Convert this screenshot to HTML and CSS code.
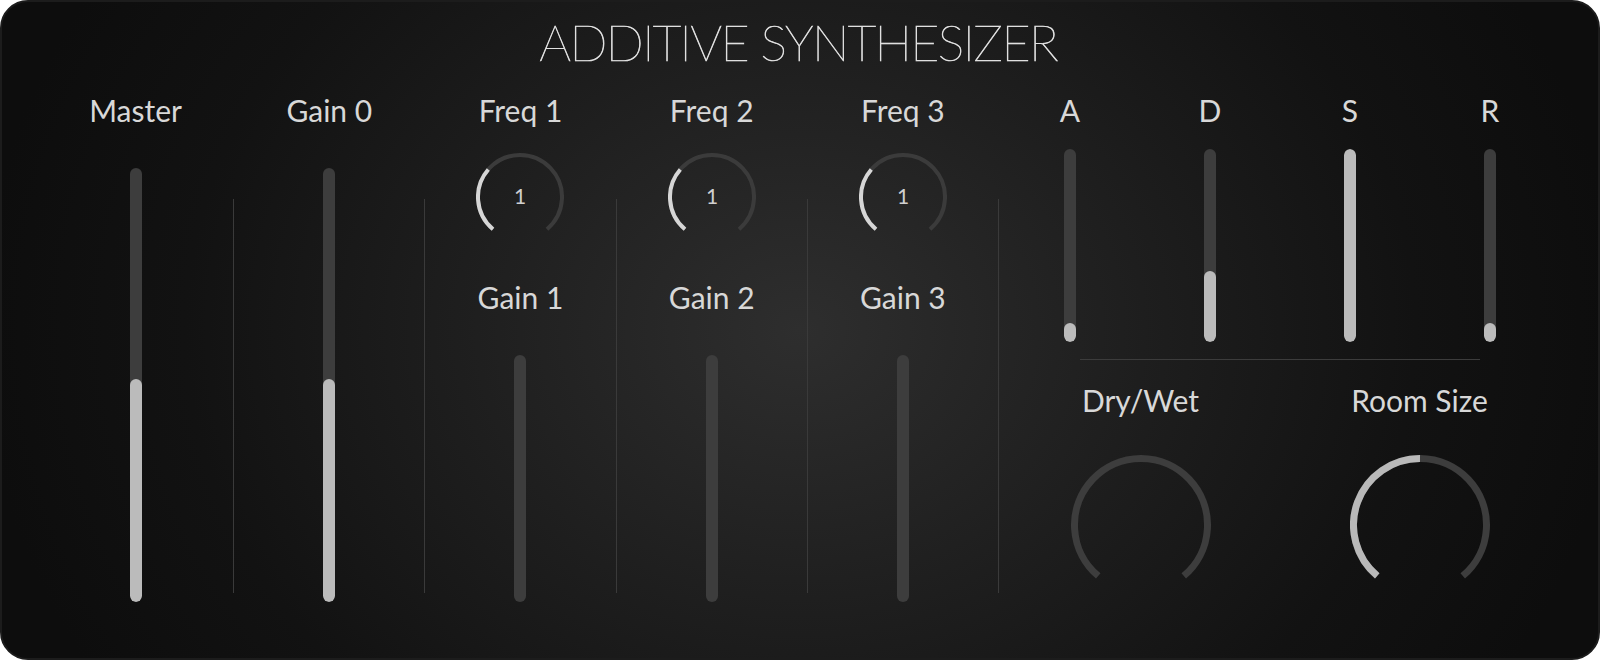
FILE: index.html
```html
<!DOCTYPE html>
<html>
<head>
<meta charset="utf-8">
<title>Additive Synthesizer</title>
<link rel="stylesheet" href="styles.css">
</head>
<body>
<div class="panel">
  <h1 class="title">ADDITIVE SYNTHESIZER</h1>
  <div class="main">
    <div class="col">
      <div class="label">Master</div>
      <div class="track tall"><div class="fill" style="height:51.5%"></div></div>
    </div>
    <div class="sep"></div>
    <div class="col">
      <div class="label">Gain 0</div>
      <div class="track tall"><div class="fill" style="height:51.5%"></div></div>
    </div>
    <div class="sep"></div>
    <div class="col">
      <div class="label">Freq 1</div>
      <svg class="knob-sm" width="88" height="88" viewBox="0 0 88 88">
        <path class="k-track" d="M 17.0 76.17 A 42 42 0 1 1 71.0 76.17"/>
        <path class="k-fill-sm" d="M 17.0 76.17 A 42 42 0 0 1 12.30 16.44"/>
        <text class="k-val" x="44" y="42">1</text>
      </svg>
      <div class="label label-gain">Gain 1</div>
      <div class="track short"></div>
    </div>
    <div class="sep"></div>
    <div class="col">
      <div class="label">Freq 2</div>
      <svg class="knob-sm" width="88" height="88" viewBox="0 0 88 88">
        <path class="k-track" d="M 17.0 76.17 A 42 42 0 1 1 71.0 76.17"/>
        <path class="k-fill-sm" d="M 17.0 76.17 A 42 42 0 0 1 12.30 16.44"/>
        <text class="k-val" x="44" y="42">1</text>
      </svg>
      <div class="label label-gain">Gain 2</div>
      <div class="track short"></div>
    </div>
    <div class="sep"></div>
    <div class="col">
      <div class="label">Freq 3</div>
      <svg class="knob-sm" width="88" height="88" viewBox="0 0 88 88">
        <path class="k-track" d="M 17.0 76.17 A 42 42 0 1 1 71.0 76.17"/>
        <path class="k-fill-sm" d="M 17.0 76.17 A 42 42 0 0 1 12.30 16.44"/>
        <text class="k-val" x="44" y="42">1</text>
      </svg>
      <div class="label label-gain">Gain 3</div>
      <div class="track short"></div>
    </div>
    <div class="sep"></div>
    <div class="right">
      <div class="adsr">
        <div class="env-col">
          <div class="label">A</div>
          <div class="track env"><div class="fill" style="height:10%"></div></div>
        </div>
        <div class="env-col">
          <div class="label">D</div>
          <div class="track env"><div class="fill" style="height:37%"></div></div>
        </div>
        <div class="env-col">
          <div class="label">S</div>
          <div class="track env"><div class="fill" style="height:100%"></div></div>
        </div>
        <div class="env-col">
          <div class="label">R</div>
          <div class="track env"><div class="fill" style="height:10%"></div></div>
        </div>
      </div>
      <div class="hr"></div>
      <div class="reverb">
        <div class="rev-col">
          <div class="label">Dry/Wet</div>
          <svg class="knob-lg" width="140" height="140" viewBox="0 0 140 140">
            <path class="k-track-lg" d="M 27.25 120.94 A 66.5 66.5 0 1 1 112.75 120.94"/>
          </svg>
        </div>
        <div class="rev-col">
          <div class="label">Room Size</div>
          <svg class="knob-lg" width="140" height="140" viewBox="0 0 140 140">
            <path class="k-track-lg" d="M 27.25 120.94 A 66.5 66.5 0 1 1 112.75 120.94"/>
            <path class="k-fill-lg" d="M 27.25 120.94 A 66.5 66.5 0 0 1 70 3.5"/>
          </svg>
        </div>
      </div>
    </div>
  </div>
</div>
</body>
</html>
```
FILE: styles.css
```css
html, body {
  margin: 0;
  padding: 0;
  background: #ffffff;
}

.panel {
  box-sizing: border-box;
  width: 1600px;
  height: 660px;
  border: 2px solid #1c1c1c;
  border-radius: 28px;
  padding: 15px 40px 0 36px;
  background: radial-gradient(ellipse 820px 680px at 50% 50%, #2e2e2e 0%, #1e1e1e 42%, #121212 75%, #0d0d0d 100%);
  font-family: "Lato", "Liberation Sans", sans-serif;
  color: #d8d8d8;
  overflow: hidden;
}

.title {
  margin: 0 0 29px 0;
  text-align: center;
  font-family: "Lato", "Liberation Sans", sans-serif;
  font-weight: 100;
  font-size: 50px;
  line-height: 50px;
  color: #e0e0e0;
  letter-spacing: -1.6px;
  -webkit-text-stroke: 0.7px #e0e0e0;
}

.main {
  display: flex;
  align-items: flex-start;
}

.col {
  width: 191px;
  display: flex;
  flex-direction: column;
  align-items: center;
}

.col:first-child {
  width: 196px;
}

.sep {
  width: 1px;
  height: 394px;
  margin-top: 103px;
  background: #3a3a3a;
}

.label {
  font-size: 30px;
  line-height: 28px;
  height: 28px;
  white-space: nowrap;
  color: #d8d8d8;
}

.track {
  position: relative;
  width: 12px;
  border-radius: 6px;
  background: #3d3d3d;
  display: flex;
  flex-direction: column;
  justify-content: flex-end;
  overflow: hidden;
}

.fill {
  width: 12px;
  border-radius: 6px;
  background: #bbbbbb;
}

.tall {
  height: 434px;
  margin-top: 44px;
}

.knob-sm {
  display: block;
  margin-top: 29px;
}

.k-track {
  fill: none;
  stroke: #3b3b3b;
  stroke-width: 4;
}

.k-fill-sm {
  fill: none;
  stroke: #d6d6d6;
  stroke-width: 4;
}

.k-val {
  fill: #d0d0d0;
  font-family: "Lato", "Liberation Sans", sans-serif;
  font-size: 21px;
  text-anchor: middle;
  dominant-baseline: central;
}

.label-gain {
  margin-top: 42px;
}

.short {
  height: 247px;
  margin-top: 44px;
}

.right {
  width: 559px;
  display: flex;
  flex-direction: column;
}

.adsr {
  display: grid;
  grid-template-columns: repeat(4, 140px);
  margin-left: 1px;
}

.env-col {
  display: flex;
  flex-direction: column;
  align-items: center;
}

.env {
  height: 193px;
  margin-top: 25px;
}

.hr {
  width: 400px;
  height: 1px;
  margin: 17px 0 0 81px;
  background: #3c3c3c;
}

.reverb {
  display: grid;
  grid-template-columns: 279px 279px;
  margin-top: 26px;
  margin-left: 2px;
}

.rev-col {
  display: flex;
  flex-direction: column;
  align-items: center;
}

.knob-lg {
  display: block;
  margin-top: 41px;
}

.k-track-lg {
  fill: none;
  stroke: #3d3d3d;
  stroke-width: 7;
}

.k-fill-lg {
  fill: none;
  stroke: #b9b9b9;
  stroke-width: 7;
}
```
